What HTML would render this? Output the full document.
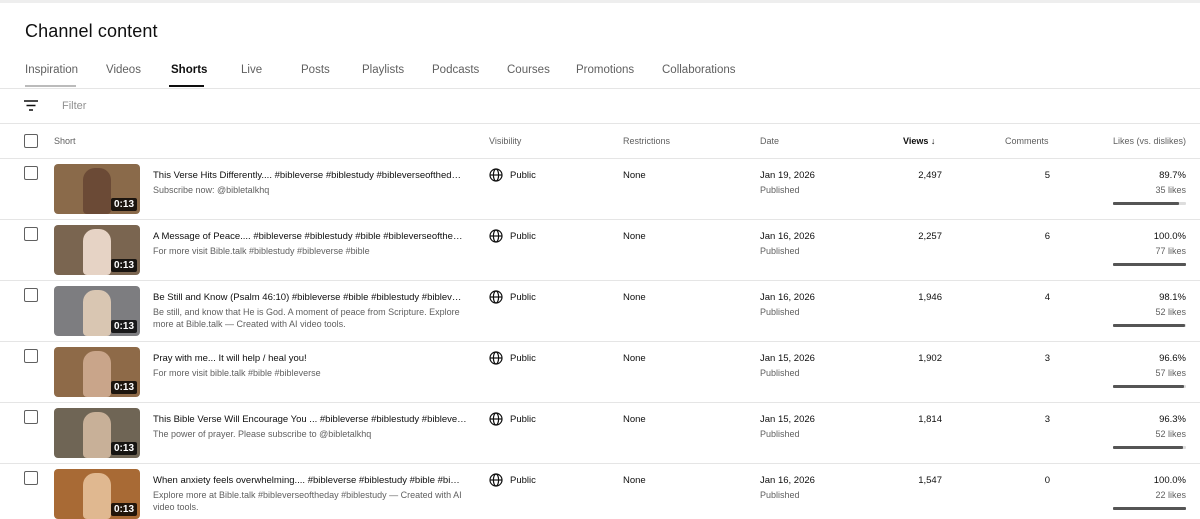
<!DOCTYPE html><html><head><style>
body{margin:0;width:1200px;height:511px;overflow:hidden;background:#fff;font-family:"Liberation Sans",Arial,sans-serif;color:#0f0f0f;position:relative}
.a{position:absolute;white-space:nowrap}
.topline{position:absolute;left:0;top:0;width:1200px;height:3px;background:#eee}
h1{position:absolute;left:25px;top:21px;margin:0;font-size:18px;font-weight:normal;letter-spacing:.1px}
.tab{position:absolute;top:64px;font-size:11.5px;color:#606060}
.hl{position:absolute;left:0;width:1200px;height:1px;background:#e5e5e5}
.cb{position:absolute;left:24px;width:12px;height:12px;border:1.5px solid #606060;border-radius:2px}
.th{font-size:9px;color:#606060}
.thumb{position:absolute;left:54px;width:86px;height:50px;border-radius:4px;overflow:hidden}
.face{position:absolute;left:29px;top:4px;width:28px;height:46px;border-radius:12px 12px 4px 4px}
.dur{position:absolute;right:3px;bottom:3px;background:rgba(0,0,0,.8);color:#fff;font-size:10px;padding:1px 3px;border-radius:2px;font-weight:bold}
.t1{font-size:9.5px}.t2{font-size:9px;color:#606060}
.bar{position:absolute;left:1113px;width:73px;height:3px;background:#ddd;border-radius:1px}
.bar i{display:block;height:3px;background:#555;border-radius:1px}
</style></head><body>
<div class="topline"></div>
<h1>Channel content</h1>
<div class="tab" style="left:25px">Inspiration</div>
<div class="tab" style="left:106px">Videos</div>
<div class="tab" style="left:171px;color:#0f0f0f;font-weight:bold">Shorts</div>
<div class="tab" style="left:241px">Live</div>
<div class="tab" style="left:301px">Posts</div>
<div class="tab" style="left:362px">Playlists</div>
<div class="tab" style="left:432px">Podcasts</div>
<div class="tab" style="left:507px">Courses</div>
<div class="tab" style="left:576px">Promotions</div>
<div class="tab" style="left:662px">Collaborations</div>
<div style="position:absolute;left:25px;top:85px;width:51px;height:2px;background:#bbb"></div>
<div style="position:absolute;left:169px;top:85px;width:35px;height:2px;background:#0f0f0f"></div>
<div class="hl" style="top:88px"></div>
<svg class="a" style="left:24px;top:100px" width="14" height="12"><path d="M0 1h14M2.5 5.5h9M5 10h4" stroke="#0f0f0f" stroke-width="1.6"/></svg>
<div class="a" style="left:62px;top:100px;font-size:11px;color:#909090">Filter</div>
<div class="hl" style="top:123px"></div>
<div class="cb" style="top:134px"></div>
<div class="a th" style="left:54px;top:136px">Short</div>
<div class="a th" style="left:489px;top:136px">Visibility</div>
<div class="a th" style="left:623px;top:136px">Restrictions</div>
<div class="a th" style="left:760px;top:136px">Date</div>
<div class="a th" style="left:903px;top:136px;color:#0f0f0f;font-weight:bold">Views ↓</div>
<div class="a th" style="left:1005px;top:136px">Comments</div>
<div class="a th" style="right:14px;top:136px">Likes (vs. dislikes)</div>
<div class="hl" style="top:158px"></div>
<div id="rows"></div>
<script>
var R=[["This Verse Hits Differently.... #bibleverse #biblestudy #bibleverseofthed…","Subscribe now: @bibletalkhq","","Jan 19, 2026","2,497","5","89.7%","35 likes",90,"#8a6a4a","#6b4a36"],
["A Message of Peace.... #bibleverse #biblestudy #bible #bibleverseofthe…","For more visit Bible.talk #biblestudy #bibleverse #bible","","Jan 16, 2026","2,257","6","100.0%","77 likes",100,"#7a6550","#e6d3c5"],
["Be Still and Know (Psalm 46:10) #bibleverse #bible #biblestudy #biblev…","Be still, and know that He is God. A moment of peace from Scripture. Explore","more at Bible.talk — Created with AI video tools.","Jan 16, 2026","1,946","4","98.1%","52 likes",98,"#7d7d80","#d9c6b2"],
["Pray with me... It will help / heal you!","For more visit bible.talk #bible #bibleverse","","Jan 15, 2026","1,902","3","96.6%","57 likes",97,"#8e6a48","#c9a58a"],
["This Bible Verse Will Encourage You ... #bibleverse #biblestudy #bibleve…","The power of prayer. Please subscribe to @bibletalkhq","","Jan 15, 2026","1,814","3","96.3%","52 likes",96,"#6f6555","#c8b098"],
["When anxiety feels overwhelming.... #bibleverse #biblestudy #bible #bi…","Explore more at Bible.talk #bibleverseoftheday #biblestudy — Created with AI","video tools.","Jan 16, 2026","1,547","0","100.0%","22 likes",100,"#a86a35","#e0b890"]];
var h="";R.forEach(function(r,i){var y=158+i*61;
h+='<div class="cb" style="top:'+(y+8)+'px"></div>';
h+='<div class="thumb" style="top:'+(y+6)+'px;background:'+r[9]+'"><div class="face" style="background:'+r[10]+'"></div><div class="dur">0:13</div></div>';
h+='<div class="a t1" style="left:153px;top:'+(y+12)+'px">'+r[0]+'</div>';
h+='<div class="a t2" style="left:153px;top:'+(y+27)+'px">'+r[1]+'</div>';
if(r[2])h+='<div class="a t2" style="left:153px;top:'+(y+39)+'px">'+r[2]+'</div>';
h+='<svg class="a" style="left:489px;top:'+(y+10)+'px" width="14" height="14" viewBox="0 0 14 14" fill="none" stroke="#0f0f0f" stroke-width="1.2"><circle cx="7" cy="7" r="6"/><ellipse cx="7" cy="7" rx="2.6" ry="6"/><path d="M1 7h12"/></svg>';
h+='<div class="a t1" style="left:510px;top:'+(y+12)+'px">Public</div>';
h+='<div class="a t1" style="left:623px;top:'+(y+12)+'px">None</div>';
h+='<div class="a t1" style="left:760px;top:'+(y+12)+'px">'+r[3]+'</div>';
h+='<div class="a t2" style="left:760px;top:'+(y+27)+'px">Published</div>';
h+='<div class="a t1" style="right:258px;top:'+(y+12)+'px">'+r[4]+'</div>';
h+='<div class="a t1" style="right:150px;top:'+(y+12)+'px">'+r[5]+'</div>';
h+='<div class="a t1" style="right:14px;top:'+(y+12)+'px">'+r[6]+'</div>';
h+='<div class="a t2" style="right:14px;top:'+(y+27)+'px">'+r[7]+'</div>';
h+='<div class="bar" style="top:'+(y+44)+'px"><i style="width:'+r[8]+'%"></i></div>';
if(i<5)h+='<div class="hl" style="top:'+(y+61)+'px"></div>';});
document.getElementById("rows").innerHTML=h;
</script>
</body></html>
